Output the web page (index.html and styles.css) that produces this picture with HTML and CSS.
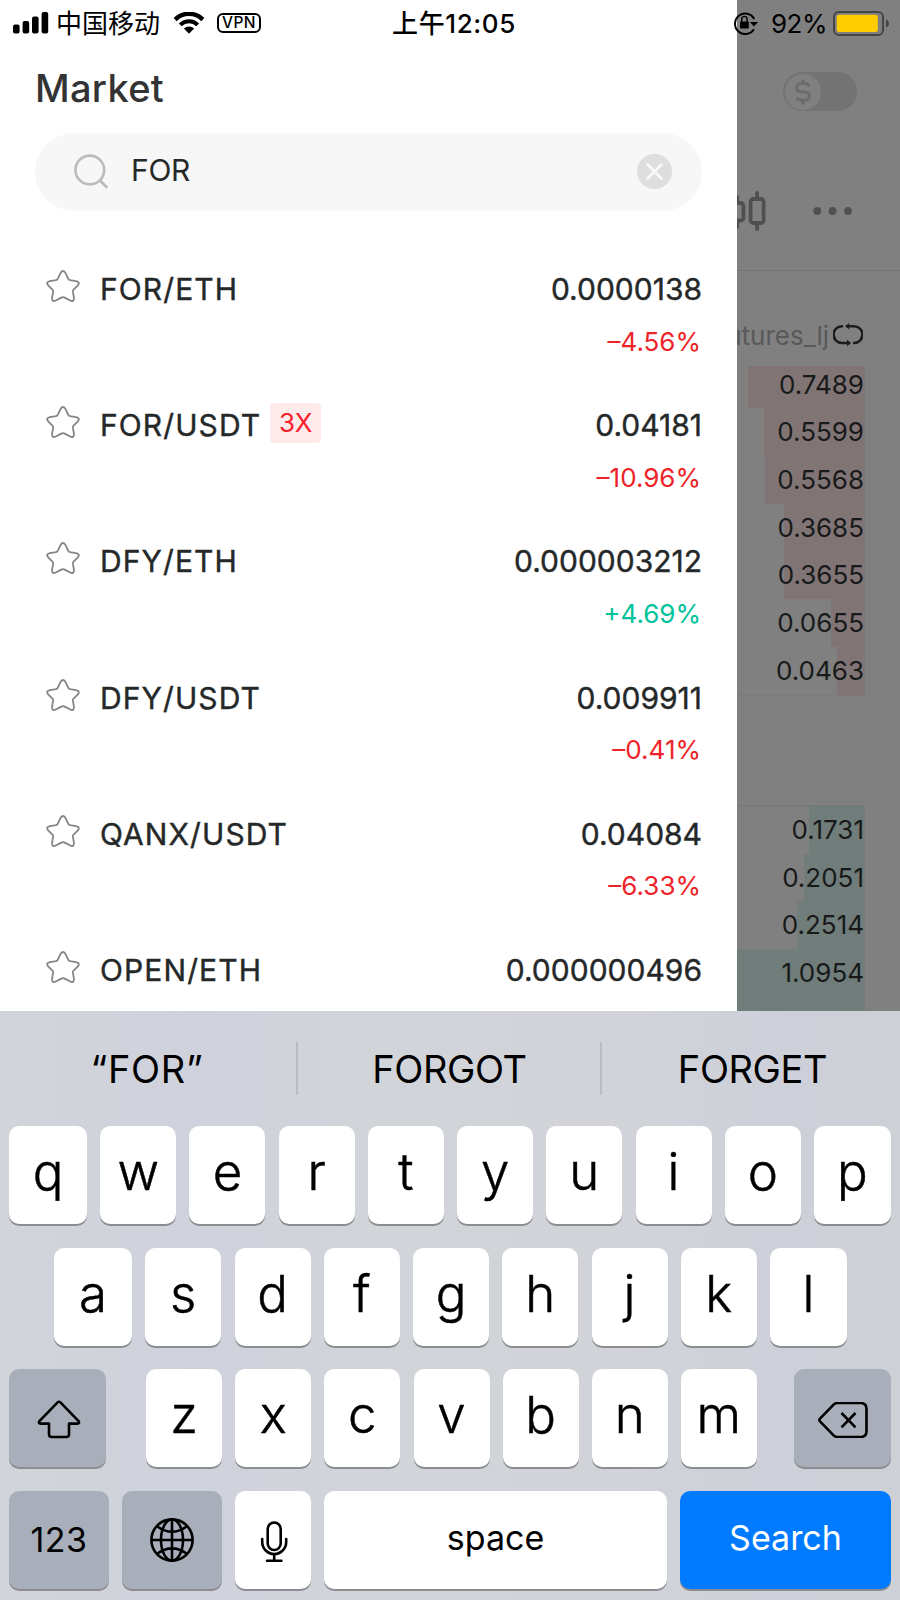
FILE: index.html
```html
<!DOCTYPE html>
<html lang="en">
<head>
    <meta charset="UTF-8">
    <meta name="viewport" content="width=device-width, initial-scale=1.0">
    <title>Market</title>
    <link rel="stylesheet" href="styles.css">
</head>
<body>
    <svg class="symbols">
        <symbol id="star" viewBox="0 0 34 34">
            <path d="M17 2C18.2 2 19 3 19.8 4.6L22.3 9.8C22.7 10.6 23.3 11 24.1 11.2L30 12.1C33.2 12.6 33.6 14.6 31.6 16.6L27.6 20.6C27 21.2 26.8 21.9 26.9 22.7L27.9 28.7C28.3 31.7 26.6 32.7 24.3 31.5L18.7 28.6C17.6 28 16.4 28 15.3 28.6L9.7 31.5C7.4 32.7 5.7 31.7 6.1 28.7L7.1 22.7C7.2 21.9 7 21.2 6.4 20.6L2.4 16.6C.4 14.6.8 12.6 4 12.1L9.9 11.2C10.7 11 11.3 10.6 11.7 9.8L14.2 4.6C15 3 15.8 2 17 2Z" fill="none" stroke="#858585" stroke-width="1.8"/>
        </symbol>
    </svg>

    <!-- status bar lies over the drawer and the dimmed page -->
    <header class="status-bar">
        <div class="status-left">
            <svg class="signal" width="36" height="22" viewBox="0 0 36 22">
                <rect x="0" y="12.5" width="6.6" height="9" rx="2"/>
                <rect x="9.6" y="9" width="6.6" height="12.5" rx="2"/>
                <rect x="19" y="4.5" width="6.6" height="17" rx="2"/>
                <rect x="28.6" y="0" width="6.6" height="21.5" rx="2"/>
            </svg>
            <span class="carrier">中国移动</span>
            <svg class="wifi" width="32" height="22" viewBox="0 0 32 22">
                <path d="M2.2 7.6A19.4 19.4 0 0 1 29.8 7.6" fill="none" stroke="#000" stroke-width="4.4"/>
                <path d="M7.3 12.9A12.2 12.2 0 0 1 24.7 12.9" fill="none" stroke="#000" stroke-width="4"/>
                <path d="M10.9 16.6A7.2 7.2 0 0 1 21.1 16.6L16 21.8Z"/>
            </svg>
            <span class="vpn">VPN</span>
        </div>
        <div class="status-time">上午12:05</div>
        <div class="status-right">
            <svg class="lock" width="26" height="24" viewBox="0 0 26 24">
                <path d="M20.9 18.2A10.2 10.2 0 1 1 21.2 8" fill="none" stroke="#000" stroke-width="2"/>
                <path d="M16.8 11H25L21 15.5Z"/>
                <rect x="7" y="10.6" width="8.8" height="7" rx="1"/>
                <path d="M8.7 11V8.4A2.7 3 0 0 1 14.1 8.4V11" fill="none" stroke="#000" stroke-width="1.4"/>
            </svg>
            <span class="percent">92%</span>
            <svg class="battery" width="57" height="25" viewBox="0 0 57 25">
                <rect x="1" y="1" width="49" height="23" rx="5" fill="none" stroke="#464646" stroke-width="2"/>
                <rect x="3.8" y="3.8" width="41" height="17.2" rx="2.5" fill="#ffcc00"/>
                <path d="M53 8.5Q56 9.6 56 12.5Q56 15.4 53 16.5Z" fill="#464646"/>
            </svg>
        </div>
    </header>

    <main class="screen">
        <section class="drawer">
            <h1>Market</h1>
            <div class="search-box">
                <svg class="search-icon" width="36" height="36" viewBox="0 0 36 36">
                    <circle cx="15.8" cy="16" r="14.4"/>
                    <path d="M26 26.5L32.5 33"/>
                </svg>
                <span class="search-text">FOR</span>
                <svg class="clear" width="35" height="35" viewBox="0 0 35 35">
                    <circle cx="17.5" cy="17.5" r="17.5" fill="#dedede"/>
                    <path d="M10.5 10.5L24.5 24.5M24.5 10.5L10.5 24.5" stroke="#f9f9f9" stroke-width="2.6" stroke-linecap="round"/>
                </svg>
            </div>
            <ul class="pairs">
                <li>
                    <svg class="star"><use href="#star"/></svg>
                    <span class="pair">FOR/ETH</span>
                    <div class="quote"><b>0.0000138</b><i class="down">–4.56%</i></div>
                </li>
                <li>
                    <svg class="star"><use href="#star"/></svg>
                    <span class="pair">FOR/USDT</span>
                    <span class="lever">3X</span>
                    <div class="quote"><b>0.04181</b><i class="down">–10.96%</i></div>
                </li>
                <li>
                    <svg class="star"><use href="#star"/></svg>
                    <span class="pair">DFY/ETH</span>
                    <div class="quote"><b>0.000003212</b><i class="up">+4.69%</i></div>
                </li>
                <li>
                    <svg class="star"><use href="#star"/></svg>
                    <span class="pair">DFY/USDT</span>
                    <div class="quote"><b>0.009911</b><i class="down">–0.41%</i></div>
                </li>
                <li>
                    <svg class="star"><use href="#star"/></svg>
                    <span class="pair">QANX/USDT</span>
                    <div class="quote"><b>0.04084</b><i class="down">–6.33%</i></div>
                </li>
                <li>
                    <svg class="star"><use href="#star"/></svg>
                    <span class="pair">OPEN/ETH</span>
                    <div class="quote"><b>0.000000496</b></div>
                </li>
            </ul>
        </section>

        <aside class="dimmed">
            <div class="toggle">
                <span class="knob">
                    <svg width="16" height="26" viewBox="0 0 16 26">
                        <path d="M13.5 6.2Q12.8 4.6 10.5 4.6H5.8A4.1 4.1 0 0 0 5.8 12.9H10.2A4.1 4.1 0 0 1 10.2 21.2H5.5Q3.2 21.2 2.4 19.8M8 1.5V4.6M8 21.2V24.5" fill="none" stroke="#6b6b6b" stroke-width="3" stroke-linecap="round"/>
                    </svg>
                </span>
            </div>
            <div class="tools">
                <svg width="30" height="42" viewBox="0 0 30 42">
                    <g fill="none" stroke="#505050" stroke-width="3.8" stroke-linecap="round">
                        <rect x="-6" y="13" width="12.4" height="17.5" rx="2.5"/>
                        <path d="M.2 7V12M.2 31V37"/>
                        <rect x="13.6" y="9" width="13" height="24" rx="2.5"/>
                        <path d="M20.1 3V9M20.1 33V39"/>
                    </g>
                </svg>
                <svg width="40" height="8" viewBox="0 0 40 8" fill="#505050">
                    <circle cx="4.3" cy="4" r="3.9"/>
                    <circle cx="19.6" cy="4" r="3.9"/>
                    <circle cx="35" cy="4" r="3.9"/>
                </svg>
            </div>
            <div class="book-head">
                <span>utures_lj</span>
                <svg width="30" height="24" viewBox="0 0 30 24">
                    <g fill="none" stroke="#1c1c1c" stroke-width="2.5">
                        <path d="M10 3.2H9A8.4 8.4 0 0 0 9 20H16M20 20H21A8.4 8.4 0 0 0 21 3.2H14"/>
                    </g>
                    <path d="M12 3.2L16.2 0V6.4ZM18.2 20L14 16.8V23.2Z" fill="#1c1c1c"/>
                </svg>
            </div>
            <ul class="book asks">
                <li style="width:117px">0.7489</li>
                <li style="width:101px">0.5599</li>
                <li style="width:100.5px">0.5568</li>
                <li style="width:81.5px">0.3685</li>
                <li style="width:81.5px">0.3655</li>
                <li style="width:34.5px">0.0655</li>
                <li style="width:28.5px">0.0463</li>
            </ul>
            <ul class="book bids">
                <li style="width:56.5px">0.1731</li>
                <li style="width:61px">0.2051</li>
                <li style="width:68px">0.2514</li>
                <li style="width:128px">1.0954</li>
                <li style="width:128px"></li>
            </ul>
        </aside>
    </main>

    <footer class="keyboard">
        <div class="suggestions">
            <span class="typed">“FOR”</span>
            <span>FORGOT</span>
            <span>FORGET</span>
        </div>
        <div class="keys row-1">
            <kbd>q</kbd><kbd>w</kbd><kbd>e</kbd><kbd>r</kbd><kbd>t</kbd><kbd>y</kbd><kbd>u</kbd><kbd>i</kbd><kbd>o</kbd><kbd>p</kbd>
        </div>
        <div class="keys row-2">
            <kbd>a</kbd><kbd>s</kbd><kbd>d</kbd><kbd>f</kbd><kbd>g</kbd><kbd>h</kbd><kbd>j</kbd><kbd>k</kbd><kbd>l</kbd>
        </div>
        <div class="keys row-3">
            <kbd class="dark shift">
                <svg width="44" height="40" viewBox="0 0 44 40">
                    <path d="M20.6 2.4Q22 1 23.4 2.4L41.6 21.2Q43 23.6 40.4 23.6H32V34.2Q32 37 29.2 37H14.8Q12 37 12 34.2V23.6H3.6Q1 23.6 2.4 21.2Z"/>
                </svg>
            </kbd>
            <kbd>z</kbd><kbd>x</kbd><kbd>c</kbd><kbd>v</kbd><kbd>b</kbd><kbd>n</kbd><kbd>m</kbd>
            <kbd class="dark back">
                <svg width="50" height="36" viewBox="0 0 50 36">
                    <path d="M2 16.6L15.6 2.6Q17.2 1 19.6 1H42.5Q48.5 1 48.5 7V29Q48.5 35 42.5 35H19.6Q17.2 35 15.6 33.4L2 19.4Q.8 18 2 16.6ZM23.5 11L37.5 25.4M37.5 11L23.5 25.4"/>
                </svg>
            </kbd>
        </div>
        <div class="keys row-4">
            <kbd class="dark num">123</kbd>
            <kbd class="dark">
                <svg width="44" height="44" viewBox="0 0 44 44">
                    <circle cx="22" cy="22" r="20.6"/>
                    <ellipse cx="22" cy="22" rx="11" ry="20.6"/>
                    <path d="M22 1.4V42.6M1.4 22H42.6M7 8.2Q22 19.2 37 8.2M7 35.8Q22 24.8 37 35.8"/>
                </svg>
            </kbd>
            <kbd class="mic">
                <svg width="28" height="42" viewBox="0 0 28 42">
                    <rect x="7.7" y="1.5" width="13" height="27.5" rx="6.5"/>
                    <path d="M2.2 18V21A12 12 0 0 0 26.2 21V18M14.2 33V39.5M7 39.7H21.4" stroke-linecap="round"/>
                </svg>
            </kbd>
            <kbd class="word">space</kbd>
            <kbd class="word search">Search</kbd>
        </div>
    </footer>
</body>
</html>
```
FILE: styles.css
```css
*{
    margin:0;
    padding:0;
    box-sizing:border-box;
}
body{
    width:900px;
    height:1600px;
    overflow:hidden;
    position:relative;
    background-color:white;
    font-family:Inter, "Noto Sans CJK SC", sans-serif;
    color:#252828;
}
ul{
    list-style:none;
}
svg{
    display:block;
    flex:none;
}
.symbols{
    display:none;
}

/* status bar */
.status-bar{
    position:absolute;
    top:0;
    left:0;
    width:900px;
    height:44px;
    padding:0 10px 0 13px;
    display:grid;
    grid-template-columns:1fr auto 1fr;
    align-items:center;
    color:black;
    font-size:26px;
    line-height:44px;
    z-index:2;
}
.status-left,
.status-right{
    display:flex;
    align-items:center;
}
.status-right{
    justify-content:flex-end;
}
.carrier{
    margin-left:7px;
    padding-top:1px;
}
.wifi{
    margin-left:13px;
}
.vpn{
    margin-left:12px;
    width:44px;
    height:20px;
    border:2px solid black;
    border-radius:6px;
    font-size:15.5px;
    font-weight:500;
    line-height:16px;
    text-align:center;
    letter-spacing:0.5px;
}
.status-time{
    padding:2px 0 0 5px;
    font-weight:500;
    letter-spacing:0.6px;
}
.percent{
    margin:2px 6px 0 12px;
    letter-spacing:-0.5px;
}

.screen{
    display:grid;
    grid-template-columns:737px 163px;
    height:1011px;
    overflow:hidden;
}

/* drawer */
.drawer{
    padding:64px 35px 0;
    background-color:white;
}
h1{
    height:69px;
    font-size:38px;
    font-weight:500;
    line-height:49px;
    letter-spacing:0.3px;
    color:#333;
}
.search-box{
    display:flex;
    align-items:center;
    height:78px;
    padding:0 30px 0 39px;
    border-radius:39px;
    background-color:#f7f7f7;
}
.search-icon{
    fill:none;
    stroke:#bbb;
    stroke-width:2.6;
    stroke-linecap:round;
}
.search-text{
    margin-left:21px;
    padding-bottom:4px;
    flex:1;
    font-size:30px;
    letter-spacing:-0.3px;
}
.clear{
    margin-bottom:1px;
}
.pairs{
    margin-top:56px;
}
.pairs li{
    display:flex;
    align-items:flex-start;
    height:136.2px;
    padding-left:11px;
    line-height:44px;
}
.star{
    width:34px;
    height:34px;
    margin:2px 20px 0 0;
}
.pair,
.quote b{
    font-size:30px;
    font-weight:400;
    -webkit-text-stroke:0.4px #252828;
}
.pair{
    letter-spacing:1.1px;
}
.lever{
    margin:0 0 0 9px;
    width:51px;
    height:40px;
    border-radius:4px;
    background-color:#fdeaeb;
    color:#f5222d;
    font-size:26px;
    line-height:40px;
    text-align:center;
}
.quote{
    margin-left:auto;
    display:flex;
    flex-direction:column;
    align-items:flex-end;
    gap:8.5px;
}
.quote i{
    padding-right:1px;
    font-size:26px;
    font-style:normal;
}
.down{
    color:#ee2329;
}
.up{
    color:#00c29a;
}

/* page behind the drawer */
.dimmed{
    background-color:#808080;
    padding-top:72px;
    overflow:hidden;
}
.toggle{
    margin-left:46px;
    width:74px;
    height:39px;
    padding:1.5px;
    border-radius:20px;
    background-color:#737373;
}
.knob{
    display:flex;
    align-items:center;
    justify-content:center;
    width:36px;
    height:36px;
    border-radius:50%;
    background-color:#808080;
}
.tools{
    display:flex;
    align-items:center;
    justify-content:space-between;
    height:160px;
    padding:40px 47px 0 0;
    border-bottom:1.5px solid #747474;
}
.book-head{
    display:flex;
    align-items:center;
    justify-content:flex-end;
    gap:4px;
    height:94.5px;
    padding:33px 37px 0 0;
    font-size:26px;
    color:#595959;
}
.book-head span{
    padding-top:1px;
}
.book{
    width:128px;
}
.book li{
    display:flex;
    justify-content:flex-end;
    margin-left:auto;
    height:47.8px;
    padding-right:1px;
    font-size:26px;
    line-height:48px;
    color:#171a19;
}
.asks{
    border-bottom:1px solid #7b7b7b;
}
.asks li{
    background-color:#817475;
}
.asks li:first-child{
    height:42.5px;
    line-height:38px;
}
.bids{
    margin-top:109px;
    border-top:1px solid #777;
}
.bids li{
    background-color:#707d7b;
}

/* keyboard */
.keyboard{
    height:589px;
    padding:0 9px;
    background:linear-gradient(90deg, #d1d4d9 0, #cfd2dc 22%, #d1d4d9 40%, #d1d3d9 70%, #cdd0d9 88%, #cdd0d5 100%);
    color:black;
}
.suggestions{
    display:grid;
    grid-template-columns:296px 304px 300px;
    align-items:center;
    height:115px;
    margin:0 -9px;
}
.suggestions span{
    height:53px;
    padding-left:1px;
    font-size:38px;
    line-height:54px;
    letter-spacing:-0.4px;
    text-align:center;
}
.suggestions span + span{
    border-left:2px solid #b9bcc1;
}
.suggestions span:last-child{
    padding-left:3px;
}
.suggestions .typed{
    padding:0 2px 0 0;
    letter-spacing:0.7px;
}
.keys{
    display:grid;
    justify-content:space-between;
    height:98px;
    margin-bottom:23.7px;
}
.row-1{
    grid-template-columns:78px repeat(8, 76px) 77px;
}
.row-2{
    grid-template-columns:78px repeat(7, 76px) 77px;
    padding:0 44px 0 45px;
}
.row-3{
    grid-template-columns:124px repeat(7, 76px) 121px;
}
.row-4{
    grid-template-columns:100px 100px 76px 343px 211px;
}
kbd{
    display:flex;
    align-items:center;
    justify-content:center;
    padding-bottom:7px;
    border-radius:10px;
    background-color:white;
    box-shadow:0 2px 0 #8b8d91;
    font-family:Inter, sans-serif;
    font-size:51px;
    font-weight:300;
    line-height:1;
    -webkit-text-stroke:0.5px black;
}
kbd svg{
    fill:none;
    stroke:black;
    stroke-width:2.6;
    stroke-linejoin:round;
}
.dark{
    background-color:#a9afba;
    padding-bottom:0;
}
.shift,
.back{
    width:97px;
    padding:3px 0 0 3px;
}
.back{
    justify-self:end;
    padding:3px 0 0;
}
.mic{
    padding:3px 0 0 1px;
}
.num,
.word{
    font-size:34px;
    font-weight:400;
    -webkit-text-stroke:0;
}
.num{
    letter-spacing:0.4px;
}
.word{
    padding-bottom:5px;
}
.search{
    background-color:#007aff;
    color:white;
}
```
